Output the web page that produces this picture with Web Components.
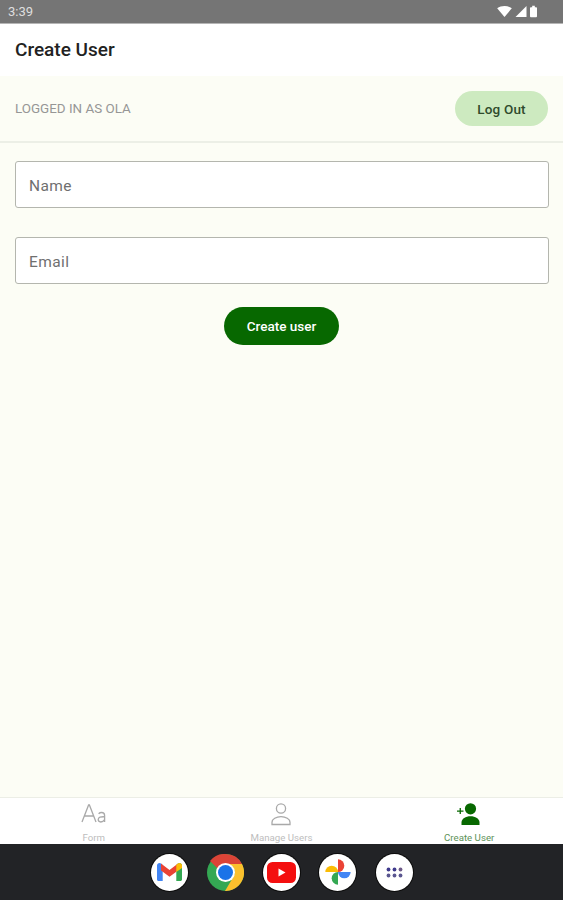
<!DOCTYPE html>
<html>
<head>
<meta charset="utf-8">
<title>Create User</title>
<style>
  html, body { margin: 0; height: 100%; }
  body { font-family: Roboto, "Liberation Sans", sans-serif; }
  #app { display: flex; flex-direction: column; height: 900px; overflow: hidden; background: #fcfdf5; }
  .grow { flex: 1; }
</style>
</head>
<body>
<div id="app">
  <status-bar time="3:39"></status-bar>
  <app-header>Create User</app-header>
  <user-bar user="LOGGED IN AS OLA"></user-bar>
  <create-form></create-form>
  <div class="grow"></div>
  <tab-bar>
    <tab-item label="Form">
      <svg width="26" height="24" viewBox="0 0 26 24" fill="none" stroke="#a9a9a9" stroke-width="1.3"><path d="M1 20 7.600 3h.8L15 20M3.400 14h9.200"/><path d="M17.600 11.800c.9-.9 1.900-1.300 3-1.300 2.100 0 3 1.100 3 3V20M23.600 14.800c-3.800-.2-6.400.4-6.400 2.800 0 1.500 1 2.400 2.600 2.400 1.700 0 3-1 3.800-2.500"/></svg>
    </tab-item>
    <tab-item label="Manage Users">
      <svg width="24" height="24" viewBox="0 0 24 24" fill="none" stroke="#a9a9a9" stroke-width="1.3"><circle cx="12" cy="6.500" r="4.600"/><path d="M3 22.500v-2.200c0-3.200 4.200-5.600 9-5.600s9 2.400 9 5.600v2.200z"/></svg>
    </tab-item>
    <tab-item label="Create User" active>
      <svg width="26" height="24" viewBox="0 0 26 24" fill="#076800"><circle cx="14.500" cy="6.800" r="5.600"/><path d="M5.500 23v-2.600c0-3.700 4.200-6.200 9-6.200s9 2.500 9 6.200V23z"/><path d="M1 8.400h2.600V6h1.300v2.400h2.600v1.300H4.900v2.400H3.600V9.700H1z"/></svg>
    </tab-item>
  </tab-bar>
  <nav-dock>
    <dock-icon>
      <svg width="25" height="18" viewBox="0 0 25 18">
        <path d="M0 2.500C0 .4 2.400-.7 4 .6l1.700 1.300V18H1.500C.7 18 0 17.300 0 16.500z" fill="#4285f4"/>
        <path d="M25 2.500C25 .4 22.600-.7 21 .6l-1.700 1.300V18h4.200c.8 0 1.500-.7 1.500-1.500z" fill="#34a853"/>
        <path d="M4 .6 12.500 7 21 .6l-1.700 8.200-6.800 5-6.800-5-1.700-1.300z" fill="#ea4335"/>
        <path d="M19.300 1.900 21 .6C22.600-.7 25 .4 25 2.500v2.400l-5.700 4.200z" fill="#fbbc04"/>
      </svg>
    </dock-icon>
    <chrome-icon></chrome-icon>
    <dock-icon>
      <svg width="29" height="21" viewBox="0 0 29 21"><rect width="29" height="21" rx="5.500" fill="#f40f0f"/><path d="M11.500 6.500l7 4-7 4z" fill="#fff"/></svg>
    </dock-icon>
    <dock-icon>
      <svg width="30" height="30" viewBox="0 0 32 32"><path d="M16 16V2.500A6.750 6.750 0 0 1 16 16z" fill="#ea4335"/><path d="M16 16H2.500A6.750 6.750 0 0 1 16 16z" fill="#fbbc04"/><path d="M16 16v13.500A6.750 6.750 0 0 1 16 16z" fill="#34a853"/><path d="M16 16h13.500A6.750 6.750 0 0 1 16 16z" fill="#4285f4"/></svg>
    </dock-icon>
    <dock-icon>
      <svg width="17" height="11" viewBox="0 0 17 11"><g fill="#3f3a8c"><circle cx="2.500" cy="2.500" r="1.900"/><circle cx="8.500" cy="2.500" r="1.900"/></g><circle cx="14.500" cy="2.500" r="1.900" fill="#6e5a88"/><g fill="#5a5690"><circle cx="2.500" cy="8.500" r="1.900"/><circle cx="8.500" cy="8.500" r="1.900"/><circle cx="14.500" cy="8.500" r="1.900"/></g></svg>
    </dock-icon>
  </nav-dock>
</div>

<script>
class StatusBar extends HTMLElement {
  constructor() {
    super();
    this.attachShadow({ mode: 'open' });
    this.shadowRoot.innerHTML = `
      <style>
        :host {
          display: flex;
          align-items: center;
          justify-content: space-between;
          box-sizing: border-box;
          height: 24px;
          padding: 0 26px 0 8px;
          background: #757575;
          border-bottom: 1px solid #b5b5b5;
          color: #dedede;
          font-size: 13px;
        }
        .icons { display: flex; align-items: center; gap: 3px; }
      </style>
      <span>${this.getAttribute('time')}</span>
      <span class="icons">
        <svg width="15" height="11" viewBox="0 0 16 12" fill="#fff"><path d="M0 2.500C4.500-.8 11.500-.8 16 2.500L8 12z"/></svg>
        <svg width="12" height="11" viewBox="0 0 11 11" fill="#fff"><path d="M11 0v11H0z"/></svg>
        <svg width="7" height="13" viewBox="0 0 8 13" fill="#fff"><path d="M2.500 0h3v1.500H7c.6 0 1 .4 1 1V12c0 .6-.4 1-1 1H1c-.6 0-1-.4-1-1V2.500c0-.6.4-1 1-1h1.500z"/></svg>
      </span>
    `;
  }
}

class AppHeader extends HTMLElement {
  constructor() {
    super();
    this.attachShadow({ mode: 'open' });
    this.shadowRoot.innerHTML = `
      <style>
        :host {
          display: flex;
          align-items: center;
          box-sizing: border-box;
          height: 52px;
          padding: 0 15px 2px;
          background: #fff;
          color: #222;
          font-size: 19px;
          font-weight: 500;
        }
      </style>
      <slot></slot>
    `;
  }
}

class UserBar extends HTMLElement {
  constructor() {
    super();
    this.attachShadow({ mode: 'open' });
    this.shadowRoot.innerHTML = `
      <style>
        :host {
          display: flex;
          align-items: center;
          justify-content: space-between;
          box-sizing: border-box;
          height: 67px;
          padding: 0 15px;
          border-bottom: 2px solid #ecefe6;
        }
        span { color: #969696; font-size: 13.400px; }
        button {
          width: 93px;
          height: 35px;
          padding: 0;
          border: 0;
          border-radius: 18px;
          background: #cdeac0;
          color: #2f4a2c;
          font: 500 13.500px Roboto, sans-serif;
          letter-spacing: .2px;
        }
      </style>
      <span>${this.getAttribute('user')}</span>
      <button>Log Out</button>
    `;
  }
}

class TextBox extends HTMLElement {
  constructor() {
    super();
    this.attachShadow({ mode: 'open' });
    this.shadowRoot.innerHTML = `
      <style>
        :host { display: block; }
        input {
          display: block;
          box-sizing: border-box;
          width: 100%;
          height: 47px;
          padding: 2px 13px 0;
          border: 1px solid #b4b6ae;
          border-radius: 3px;
          background: #fff;
          font: 15.500px Roboto, sans-serif;
          letter-spacing: .4px;
          outline: none;
        }
        input::placeholder { color: #6f6f6f; opacity: 1; }
      </style>
      <input placeholder="${this.getAttribute('placeholder')}">
    `;
  }
}

class CreateForm extends HTMLElement {
  constructor() {
    super();
    this.attachShadow({ mode: 'open' });
    this.shadowRoot.innerHTML = `
      <style>
        :host {
          display: flex;
          flex-direction: column;
          gap: 29px;
          padding: 18px 14px 0 15px;
        }
        button {
          align-self: center;
          width: 115px;
          height: 38px;
          margin: -6px 1px 0 0;
          padding: 0;
          border: 0;
          border-radius: 19px;
          background: #076800;
          color: #fff;
          font: 500 13.500px Roboto, sans-serif;
        }
      </style>
      <text-box placeholder="Name"></text-box>
      <text-box placeholder="Email"></text-box>
      <button>Create user</button>
    `;
  }
}

class TabBar extends HTMLElement {
  constructor() {
    super();
    this.attachShadow({ mode: 'open' });
    this.shadowRoot.innerHTML = `
      <style>
        :host {
          display: grid;
          grid-template-columns: repeat(3, 1fr);
          box-sizing: border-box;
          height: 47px;
          background: #fff;
          border-top: 1px solid #eceee6;
        }
      </style>
      <slot></slot>
    `;
  }
}

class TabItem extends HTMLElement {
  constructor() {
    super();
    this.attachShadow({ mode: 'open' });
    this.shadowRoot.innerHTML = `
      <style>
        :host {
          display: flex;
          flex-direction: column;
          align-items: center;
          padding-top: 4px;
          color: #bdbdbd;
          font-size: 9.700px;
          line-height: 10px;
        }
        :host([active]) { color: #5c9257; }
        span { margin-top: 7px; }
      </style>
      <slot></slot>
      <span>${this.getAttribute('label')}</span>
    `;
  }
}

class NavDock extends HTMLElement {
  constructor() {
    super();
    this.attachShadow({ mode: 'open' });
    this.shadowRoot.innerHTML = `
      <style>
        :host {
          display: flex;
          align-items: center;
          justify-content: center;
          gap: 19.250px;
          height: 56px;
          background: #222326;
        }
      </style>
      <slot></slot>
    `;
  }
}

class DockIcon extends HTMLElement {
  constructor() {
    super();
    this.attachShadow({ mode: 'open' });
    this.shadowRoot.innerHTML = `
      <style>
        :host {
          display: flex;
          align-items: center;
          justify-content: center;
          width: 37px;
          height: 37px;
          border-radius: 50%;
          background: #fff;
          box-shadow: 0 0 0 1px #0c0c0c;
        }
      </style>
      <slot></slot>
    `;
  }
}

class ChromeIcon extends HTMLElement {
  constructor() {
    super();
    this.attachShadow({ mode: 'open' });
    this.shadowRoot.innerHTML = `
      <style>
        :host { display: block; width: 37px; height: 37px; }
        svg { display: block; }
      </style>
      <svg width="37" height="37" viewBox="0 0 37 37">
        <circle cx="18.500" cy="18.500" r="18.500" fill="#34a853"/>
        <path d="M18.500 0A18.500 18.500 0 0 1 35 10H18.500a8.500 8.500 0 0 0-7.600 4.800L3 7A18.500 18.500 0 0 1 18.500 0z" fill="#db4437"/>
        <path d="M35 10a18.500 18.500 0 0 1-17 27l8-13.500A8.500 8.500 0 0 0 18.500 10z" fill="#fbc02d"/>
        <circle cx="18.500" cy="18.500" r="9.500" fill="#fff"/>
        <circle cx="18.500" cy="18.500" r="7.500" fill="#1a73e8"/>
      </svg>
    `;
  }
}

customElements.define('status-bar', StatusBar);
customElements.define('app-header', AppHeader);
customElements.define('user-bar', UserBar);
customElements.define('text-box', TextBox);
customElements.define('create-form', CreateForm);
customElements.define('tab-bar', TabBar);
customElements.define('tab-item', TabItem);
customElements.define('nav-dock', NavDock);
customElements.define('dock-icon', DockIcon);
customElements.define('chrome-icon', ChromeIcon);
</script>
</body>
</html>
